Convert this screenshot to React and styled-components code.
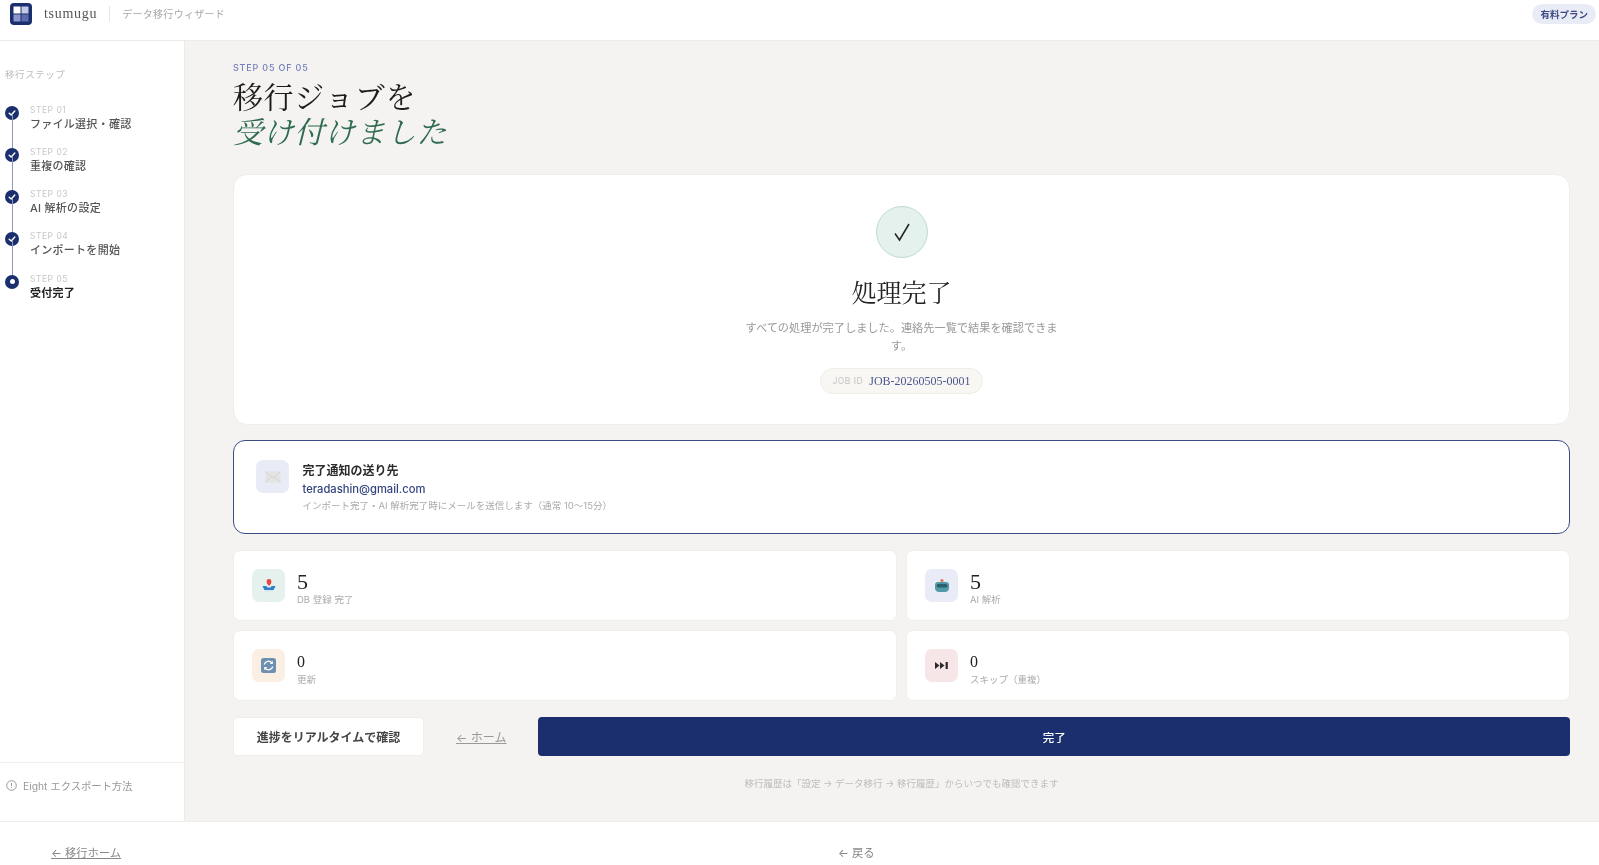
import React from 'react'
import styled, { createGlobalStyle } from 'styled-components'

const serif = `"Liberation Serif", "Noto Serif CJK JP", "Noto Sans CJK JP", serif`
const sans = `Inter, "Noto Sans CJK JP", sans-serif`
const navy = '#1b2f6e'

const GlobalStyle = createGlobalStyle`
  html, body { margin: 0; padding: 0; height: 100%; overflow: hidden; background: #fff; }
  body { font-family: ${sans}; }
  * { box-sizing: border-box; }
`

const Page = styled.div`
  height: 865px;
  display: flex;
  flex-direction: column;
  overflow: hidden;
  filter: blur(0.35px);
`

const Header = styled.header`
  flex: 0 0 41px;
  display: flex;
  align-items: center;
  padding: 0 3px 13px 10px;
  background: #fff;
  border-bottom: 1px solid #ecebe8;
`

const Logo = styled.svg`
  width: 22px;
  height: 22px;
  display: block;
`

const Brand = styled.span`
  margin-left: 12px;
  font-family: ${serif};
  font-size: 14px;
  letter-spacing: 0.05em;
  color: #555;
`

const HeaderRule = styled.span`
  width: 1px;
  height: 16px;
  margin: 0 12px;
  background: #e8e7e3;
`

const HeaderTitle = styled.span`
  font-size: 10px;
  letter-spacing: 0.03em;
  color: #a8a8a8;
`

const PlanBadge = styled.span`
  margin-left: auto;
  padding: 3px 8px;
  border-radius: 10px;
  background: #e9ecf7;
  font-size: 9.5px;
  font-weight: 700;
  color: #3c4a80;
`

const Body = styled.div`
  flex: 0 0 780px;
  display: flex;
  min-height: 0;
`

const Sidebar = styled.aside`
  flex: 0 0 185px;
  display: flex;
  flex-direction: column;
  background: #fff;
  border-right: 1px solid #ecebe8;
`

const SideLabel = styled.div`
  margin: 28px 0 0 5px;
  font-size: 9.5px;
  line-height: 12px;
  letter-spacing: 0.06em;
  color: #bdbdbd;
`

const Steps = styled.ol`
  list-style: none;
  margin: 21px 0 0;
  padding: 0 0 0 5px;
`

const Step = styled.li`
  position: relative;
  height: 42.25px;
  display: flex;
  gap: 11px;

  &:not(:last-child)::after {
    content: '';
    position: absolute;
    left: 6.5px;
    top: 12px;
    bottom: -4px;
    width: 1px;
    background: #8f97c0;
  }
`

const StepDot = styled.span`
  flex: 0 0 14px;
  width: 14px;
  height: 14px;
  margin-top: 3.5px;
  display: flex;
  align-items: center;
  justify-content: center;
  border-radius: 50%;
  background: ${navy};
`

const InnerDot = styled.span`
  width: 5px;
  height: 5px;
  border-radius: 50%;
  background: #fff;
`

const StepText = styled.div`
  display: flex;
  flex-direction: column;
`

const StepNo = styled.span`
  font-size: 8.5px;
  line-height: 11px;
  letter-spacing: 0.06em;
  color: #c8c8c8;
  margin-top: 2.5px;
`

const StepName = styled.span`
  margin-top: 1px;
  font-size: 11px;
  line-height: 15px;
  letter-spacing: 0.025em;
  color: ${props => props.$current ? '#222' : '#555'};
  font-weight: ${props => props.$current ? 700 : 500};
`

const SideFooter = styled.div`
  margin-top: auto;
  height: 59px;
  display: flex;
  align-items: center;
  gap: 6px;
  padding: 0 0 14px 6px;
  border-top: 1px solid #f0efec;
  font-size: 10.3px;
  color: #999;
`

const Main = styled.main`
  flex: 1;
  min-width: 0;
  padding: 21px 29px 0 48px;
  background: #f4f3f1;
`

const Eyebrow = styled.div`
  font-size: 9px;
  line-height: 12px;
  font-weight: 500;
  letter-spacing: 0.09em;
  color: #7480bc;
`

const Title = styled.h1`
  margin: 6px 0 0;
  font-family: ${serif};
  font-size: 30px;
  line-height: 35px;
  font-weight: 400;
  letter-spacing: 0.02em;
  color: #1c1c1c;
`

const TitleAccent = styled.em`
  display: block;
  font-style: italic;
  color: #2f6b4f;
`

const HeroCard = styled.section`
  height: 251px;
  margin-top: 24px;
  padding-top: 31px;
  display: flex;
  flex-direction: column;
  align-items: center;
  background: #fff;
  border: 1px solid #eeede9;
  border-radius: 14px;
`

const CheckCircle = styled.div`
  width: 52px;
  height: 52px;
  display: flex;
  align-items: center;
  justify-content: center;
  border-radius: 50%;
  background: #e4f1ec;
  border: 1px solid #bfdccf;
`

const HeroTitle = styled.h2`
  margin: 19px 0 0;
  font-family: ${serif};
  font-size: 25px;
  line-height: 34px;
  font-weight: 400;
  color: #222;
`

const HeroText = styled.p`
  width: 320px;
  margin: 8px 0 0;
  font-size: 11.2px;
  line-height: 18px;
  text-align: center;
  color: #999;
`

const JobPill = styled.div`
  margin-top: 13px;
  height: 26px;
  padding: 0 11px;
  display: flex;
  align-items: center;
  gap: 6px;
  border-radius: 13px;
  background: #f8f7f3;
  border: 1px solid #eeede8;
`

const JobLabel = styled.span`
  font-size: 8.5px;
  letter-spacing: 0.06em;
  color: #c4c4c4;
`

const JobValue = styled.span`
  font-family: ${serif};
  font-size: 12px;
  color: #4c5690;
`

const NotifyCard = styled.section`
  height: 94px;
  margin-top: 15px;
  padding: 19px 22px;
  display: flex;
  gap: 13.5px;
  background: #fff;
  border: 1.5px solid #3d4c86;
  border-radius: 12px;
`

const IconBox = styled.div`
  flex: 0 0 33px;
  width: 33px;
  height: 33px;
  display: flex;
  align-items: center;
  justify-content: center;
  border-radius: 7px;
  background: ${props => props.$bg};
`

const NotifyText = styled.div`
  display: flex;
  flex-direction: column;
  padding-top: 2px;
`

const NotifyTitle = styled.strong`
  font-size: 12px;
  line-height: 17px;
  font-weight: 700;
  color: #2a2a2a;
`

const NotifyMail = styled.span`
  margin-top: 2px;
  font-size: 11.2px;
  line-height: 17px;
  font-weight: 500;
  color: #33437f;
`

const NotifyNote = styled.span`
  font-size: 9.5px;
  line-height: 15px;
  color: #aaa;
`

const StatGrid = styled.div`
  margin-top: 16px;
  display: grid;
  grid-template-columns: 1fr 1fr;
  gap: 9px 9px;
`

const StatCard = styled.div`
  height: 71px;
  padding: 0 18px;
  display: flex;
  align-items: center;
  gap: 12px;
  background: #fff;
  border: 1px solid #efeeea;
  border-radius: 7px;
`

const StatText = styled.div`
  display: flex;
  flex-direction: column;
  padding-top: 5px;
`

const StatValue = styled.span`
  font-family: ${serif};
  font-size: ${props => props.$small ? '16px' : '22px'};
  line-height: 24px;
  color: #222;
`

const StatLabel = styled.span`
  font-size: 9.5px;
  line-height: 12px;
  color: #aaa;
`

const Actions = styled.div`
  margin-top: 16px;
  display: flex;
  align-items: center;
`

const GhostButton = styled.button`
  flex: 0 0 191px;
  height: 39px;
  background: #fff;
  border: 1px solid #efeeea;
  border-radius: 5px;
  font: 700 12px ${sans};
  color: #444;
`

const HomeLink = styled.a`
  margin: 0 32px;
  font-size: 12px;
  color: #999;
  text-decoration: underline;
`

const PrimaryButton = styled.button`
  flex: 1;
  height: 39px;
  background: ${navy};
  border: 0;
  border-radius: 4px;
  font: 500 11.5px ${sans};
  color: #fff;
`

const Hint = styled.p`
  margin: 21px 0 0;
  font-size: 9.5px;
  line-height: 14px;
  text-align: center;
  color: #bcbcbc;
`

const Footer = styled.footer`
  flex: 0 0 44px;
  display: grid;
  grid-template-columns: 787px auto;
  padding: 23px 0 0 51px;
  background: #fff;
  border-top: 1px solid #efeeea;
`

const FooterLink = styled.a`
  font-size: 11.3px;
  line-height: 16px;
  color: #888;
  text-decoration: ${props => props.$plain ? 'none' : 'underline'};
`

const MiniCheck = () => (
  <svg width="8" height="8" viewBox="0 0 8 8" fill="none">
    <path d="M1.2 4.2 3.2 6 6.8 2" stroke="#fff" strokeWidth="1.4" strokeLinecap="round" strokeLinejoin="round" />
  </svg>
)

const MailIcon = () => (
  <svg width="16" height="12" viewBox="0 0 16 12">
    <rect x="0.5" y="0.5" width="15" height="11" fill="#e4e4e2" />
    <path d="M0.5 0.5 8 7 15.5 0.5M0.5 11.5 6 5.5M15.5 11.5 10 5.5" fill="none" stroke="#cfcfcd" strokeWidth="0.8" />
  </svg>
)

const InboxIcon = () => (
  <svg width="16" height="16" viewBox="0 0 16 16">
    <circle cx="8" cy="3.4" r="2.4" fill="#e5483f" />
    <path d="M5.4 4.8h5.2L8 8z" fill="#e5483f" />
    <path d="M1.5 8h3.8L6.5 9.6h3l1.2-1.6h3.8L12.6 12H3.4z" fill="#2f7fc9" />
    <path d="M3.4 12h9.2l-1 1.5H4.4z" fill="#d8e6ef" />
  </svg>
)

const RobotIcon = () => (
  <svg width="16" height="16" viewBox="0 0 16 16">
    <circle cx="8" cy="2.6" r="1.6" fill="#d9785a" />
    <path d="M1 6.5C1 5 2.5 4 4 4h8c1.500 0 3 1 3 2.500V10c0 2.500-2 4-4 4H5c-2 0-4-1.500-4-4z" fill="#4f9aa6" />
    <rect x="2.6" y="6" width="10.8" height="3.4" rx="1.7" fill="#2a5f6c" />
  </svg>
)

const RefreshIcon = () => (
  <svg width="15" height="15" viewBox="0 0 15 15" fill="none">
    <rect width="15" height="15" rx="2.5" fill="#6d8fb0" />
    <path d="M3.2 6.5A4.4 4.4 0 0 1 11 5M11.8 8.5A4.4 4.4 0 0 1 4 10" stroke="#fff" strokeWidth="1.3" />
    <path d="M11.8 2.8V6H8.8zM3.2 12.2V9h3z" fill="#fff" />
  </svg>
)

const SkipIcon = () => (
  <svg width="14" height="9" viewBox="0 0 14 9" fill="#2a2a2a">
    <path d="M0 1v7l4.5-3.5zM5 1v7l4.5-3.5z" />
    <rect x="10.6" y="1" width="2.2" height="7" />
  </svg>
)

const steps = [
  { no: 'STEP 01', name: 'ファイル選択・確認' },
  { no: 'STEP 02', name: '重複の確認' },
  { no: 'STEP 03', name: 'AI 解析の設定' },
  { no: 'STEP 04', name: 'インポートを開始' },
  { no: 'STEP 05', name: '受付完了', current: true },
]

const stats = [
  { value: '5', label: 'DB 登録 完了', bg: '#e5f1ed', icon: <InboxIcon /> },
  { value: '5', label: 'AI 解析', bg: '#e9ebf7', icon: <RobotIcon /> },
  { value: '0', label: '更新', bg: '#faefe2', icon: <RefreshIcon /> },
  { value: '0', label: 'スキップ（重複）', bg: '#f7e6e8', icon: <SkipIcon /> },
]

export default function App() {
  return (
    <Page>
      <GlobalStyle />
      <Header>
        <Logo viewBox="0 0 22 22">
          <rect width="22" height="22" rx="4" fill={navy} />
          <rect x="3.5" y="3.5" width="7" height="7" fill="#fff" />
          <rect x="11.5" y="3.5" width="7" height="7" fill="#c3cae6" />
          <rect x="3.5" y="11.5" width="7" height="7" fill="#8c98cc" />
          <rect x="11.5" y="11.5" width="7" height="7" fill="#5e6cae" />
        </Logo>
        <Brand>tsumugu</Brand>
        <HeaderRule />
        <HeaderTitle>データ移行ウィザード</HeaderTitle>
        <PlanBadge>有料プラン</PlanBadge>
      </Header>
      <Body>
        <Sidebar>
          <SideLabel>移行ステップ</SideLabel>
          <Steps>
            {steps.map(step => (
              <Step key={step.no}>
                <StepDot>{step.current ? <InnerDot /> : <MiniCheck />}</StepDot>
                <StepText>
                  <StepNo>{step.no}</StepNo>
                  <StepName $current={step.current}>{step.name}</StepName>
                </StepText>
              </Step>
            ))}
          </Steps>
          <SideFooter>
            <svg width="11" height="11" viewBox="0 0 11 11" fill="none">
              <circle cx="5.5" cy="5.5" r="4.8" stroke="#999" />
              <path d="M5.5 2.8v3.2M5.5 7.2v1" stroke="#999" />
            </svg>
            Eight エクスポート方法
          </SideFooter>
        </Sidebar>
        <Main>
          <Eyebrow>STEP 05 OF 05</Eyebrow>
          <Title>
            移行ジョブを
            <TitleAccent>受け付けました</TitleAccent>
          </Title>
          <HeroCard>
            <CheckCircle>
              <svg width="18" height="20" viewBox="0 0 18 20" fill="none">
                <path d="M2 11.5 6.5 18 16 2" stroke="#222" strokeWidth="1.5" />
              </svg>
            </CheckCircle>
            <HeroTitle>処理完了</HeroTitle>
            <HeroText>すべての処理が完了しました。連絡先一覧で結果を確認できます。</HeroText>
            <JobPill>
              <JobLabel>JOB ID</JobLabel>
              <JobValue>JOB-20260505-0001</JobValue>
            </JobPill>
          </HeroCard>
          <NotifyCard>
            <IconBox $bg="#e9ebf7"><MailIcon /></IconBox>
            <NotifyText>
              <NotifyTitle>完了通知の送り先</NotifyTitle>
              <NotifyMail>teradashin@gmail.com</NotifyMail>
              <NotifyNote>インポート完了・AI 解析完了時にメールを送信します（通常 10〜15分）</NotifyNote>
            </NotifyText>
          </NotifyCard>
          <StatGrid>
            {stats.map(stat => (
              <StatCard key={stat.label}>
                <IconBox $bg={stat.bg}>{stat.icon}</IconBox>
                <StatText>
                  <StatValue $small={stat.value === '0'}>{stat.value}</StatValue>
                  <StatLabel>{stat.label}</StatLabel>
                </StatText>
              </StatCard>
            ))}
          </StatGrid>
          <Actions>
            <GhostButton>進捗をリアルタイムで確認</GhostButton>
            <HomeLink>← ホーム</HomeLink>
            <PrimaryButton>完了</PrimaryButton>
          </Actions>
          <Hint>移行履歴は「設定 → データ移行 → 移行履歴」からいつでも確認できます</Hint>
        </Main>
      </Body>
      <Footer>
        <FooterLink>← 移行ホーム</FooterLink>
        <FooterLink $plain>← 戻る</FooterLink>
      </Footer>
    </Page>
  )
}
